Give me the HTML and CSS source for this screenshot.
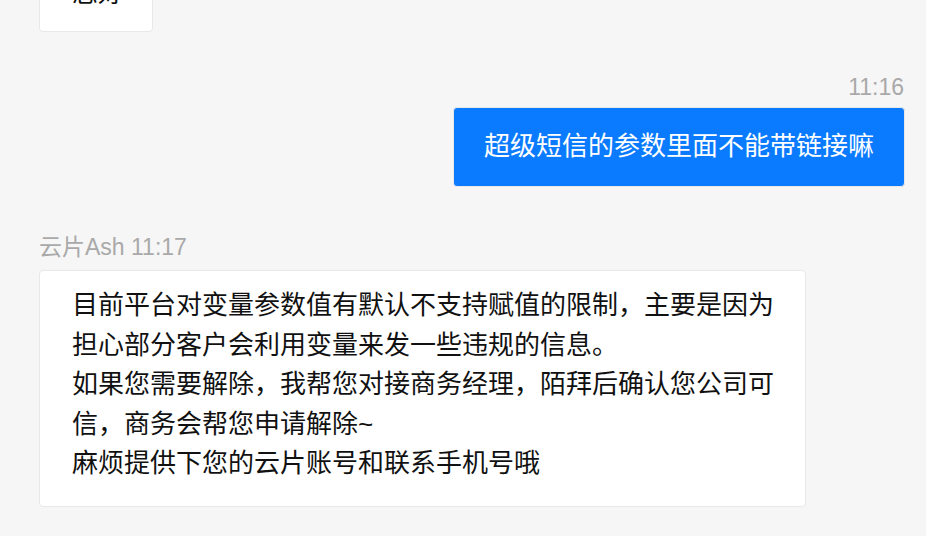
FILE: index.html
```html
<!DOCTYPE html>
<html lang="zh-CN">
<head>
<meta charset="utf-8">
<title>Chat</title>
<link rel="stylesheet" href="styles.css">
</head>
<body>
<div class="chat">
  <div class="msg msg-first">
    <div class="bubble bubble-first">您好</div>
  </div>
  <div class="msg msg-out">
    <div class="meta">11:16</div>
    <div class="bubble bubble-out">超级短信的参数里面不能带链接嘛</div>
  </div>
  <div class="msg msg-in">
    <div class="meta">云片Ash 11:17</div>
    <div class="bubble">目前平台对变量参数值有默认不支持赋值的限制，主要是因为担心部分客户会利用变量来发一些违规的信息。<br>如果您需要解除，我帮您对接商务经理，陌拜后确认您公司可信，商务会帮您申请解除~<br>麻烦提供下您的云片账号和联系手机号哦</div>
  </div>
</div>
</body>
</html>
```
FILE: styles.css
```css
html, body {
  margin: 0;
  height: 100%;
  background: #f6f6f6;
}
body {
  overflow: hidden;
  font-family: "Liberation Sans", "Noto Sans CJK SC", sans-serif;
}
.chat {
  height: 100%;
  box-sizing: border-box;
  display: flex;
  flex-direction: column;
  justify-content: flex-end;
  padding: 0 21px 29px 39px;
  overflow: hidden;
}
.msg {
  display: flex;
  flex-direction: column;
  align-items: flex-start;
  flex-shrink: 0;
}
.msg-out {
  align-items: flex-end;
  margin-top: 39.5px;
}
.msg-in {
  margin-top: 44.5px;
}
.meta {
  font-size: 23px;
  line-height: 30px;
  color: #a9a9a9;
  margin-bottom: 8.5px;
}
.msg-out .meta {
  margin-bottom: 5.5px;
  margin-right: 1px;
}
.bubble {
  box-sizing: border-box;
  max-width: 767px;
  background: #ffffff;
  border: 1px solid #e8e8e8;
  border-radius: 4px;
  padding: 15px 28px 22px 32px;
  font-size: 26px;
  line-height: 39.6px;
  color: #111111;
}
.bubble-first {
  padding-top: 20px;
  padding-bottom: 17px;
}
.bubble-out {
  background: #0a7bff;
  color: #ffffff;
  padding: 19.2px 30px;
}
```
